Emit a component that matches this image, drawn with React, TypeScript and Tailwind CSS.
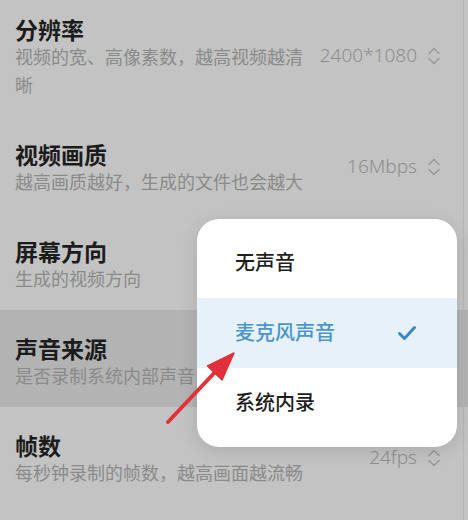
import React from 'react';

type Row = {
  title: string;
  desc: string;
  value?: string;
  active?: boolean;
  first?: boolean;
};

const rows: Row[] = [
  { title: '分辨率', desc: '视频的宽、高像素数，越高视频越清晰', value: '2400*1080', first: true },
  { title: '视频画质', desc: '越高画质越好，生成的文件也会越大', value: '16Mbps' },
  { title: '屏幕方向', desc: '生成的视频方向', value: '自动' },
  { title: '声音来源', desc: '是否录制系统内部声音，默认麦克', value: '麦克风声音', active: true },
  { title: '帧数', desc: '每秒钟录制的帧数，越高画面越流畅', value: '24fps' },
];

const options = ['无声音', '麦克风声音', '系统内录'];

function UpDown() {
  return (
    <svg width="16" height="20" viewBox="0 0 16 20" fill="none" stroke="#9a9a9a" strokeWidth="1.6" strokeLinecap="round" strokeLinejoin="round">
      <path d="M3 7.5 L8 2.5 L13 7.5" />
      <path d="M3 12.5 L8 17.5 L13 12.5" />
    </svg>
  );
}

export default function App() {
  return (
    <div
      className="relative h-[520px] w-[468px] overflow-hidden bg-[#c3c3c3]"
      style={{ fontFamily: "'Noto Sans', 'Noto Sans CJK SC', sans-serif" }}
    >
      {rows.map(r => (
        <div
          key={r.title}
          className={`flex items-center justify-between pl-[15px] pr-[26px] pb-[17px] ${r.first ? 'pt-[17px]' : 'pt-[26px]'} ${r.active ? 'bg-[#b3b3b3]' : ''}`}
        >
          <div className="w-[292px]">
            <div className="text-[23px] font-bold leading-[26px] text-[#1c1c1c]">{r.title}</div>
            <div className="text-[18px] leading-[28px] text-[#8a8a8a]">{r.desc}</div>
          </div>
          <div className="-mt-[5px] flex items-center gap-[9px]">
            <span className="text-[19px] font-light text-[#8e8e8e]">{r.value}</span>
            <UpDown />
          </div>
        </div>
      ))}

      {/* scrollbar edge */}
      <div className="absolute right-[4px] top-0 h-full w-[1px] bg-[#b5b5b5]" />

      {/* dropdown */}
      <div className="absolute left-[197px] top-[219px] w-[260px] overflow-hidden rounded-[22px] bg-white py-[9px] shadow-[0_4px_18px_rgba(0,0,0,0.12)]">
        {options.map(o => {
          const selected = o === '麦克风声音';
          return (
            <div
              key={o}
              className={`flex h-[70px] items-center justify-between pl-[38px] pr-[40px] ${selected ? 'bg-[#e7f1fa]' : ''}`}
            >
              <span className={`text-[20px] font-medium ${selected ? 'text-[#4a95cd]' : 'text-[#1e1e1e]'}`}>{o}</span>
              {selected && (
                <svg width="20" height="16" viewBox="0 0 20 16" fill="none" stroke="#3f86c4" strokeWidth="3" strokeLinecap="round" strokeLinejoin="round">
                  <path d="M2.5 8.5 L7.5 13.5 L17.5 2.5" />
                </svg>
              )}
            </div>
          );
        })}
      </div>

      {/* red pointer arrow */}
      <svg className="pointer-events-none absolute left-[160px] top-[345px]" width="80" height="85" viewBox="0 0 80 85">
        <line x1="8" y1="77" x2="58" y2="24" stroke="#e1313b" strokeWidth="4" strokeLinecap="round" />
        <polygon points="74,8 62,35 47.5,21" fill="#e1313b" stroke="#e1313b" strokeWidth="1.5" strokeLinejoin="round" />
      </svg>
    </div>
  );
}
